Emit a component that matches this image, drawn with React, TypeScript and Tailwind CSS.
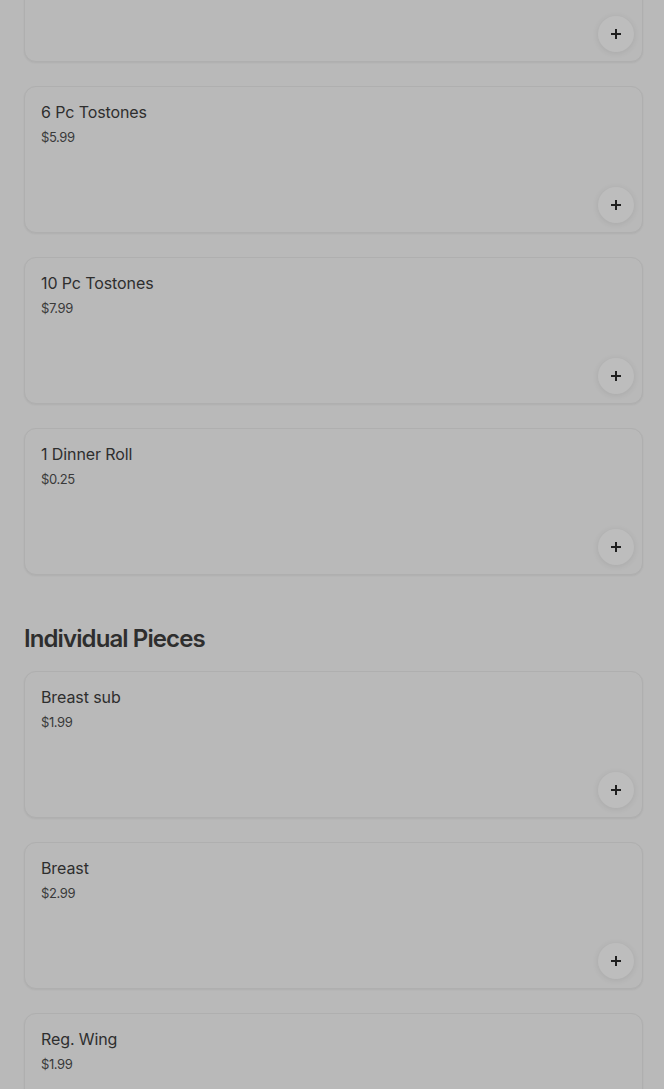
import React from "react";

const items1 = [
  { name: "", price: "" },
  { name: "6 Pc Tostones", price: "$5.99" },
  { name: "10 Pc Tostones", price: "$7.99" },
  { name: "1 Dinner Roll", price: "$0.25" },
];
const items2 = [
  { name: "Breast sub", price: "$1.99" },
  { name: "Breast", price: "$2.99" },
  { name: "Reg. Wing", price: "$1.99" },
];

function Card({ name, price, first }: { name: string; price: string; first?: boolean }) {
  return (
    <div
      className={`relative h-[147px] rounded-[12px] border border-[#afafaf] bg-[#b9b9b9] shadow-[0_1px_2px_rgba(0,0,0,0.06)] px-4 pt-[15px] ${first ? "mt-[-85px]" : ""}`}
    >
      <div className="text-[16px] leading-[20px] tracking-[-0.1px] text-[#2e2e2e]">{name}</div>
      <div className="mt-[5px] text-[13px] leading-[20px] text-[#3a3a3a] tracking-[-0.4px]">{price}</div>
      <div className="absolute right-[8px] bottom-[9px] flex h-[36px] w-[36px] items-center justify-center rounded-full bg-[#bdbdbd] shadow-[0_1px_6px_rgba(0,0,0,0.09)]">
        <svg width="12" height="12" viewBox="0 0 12 12">
          <path d="M6 1v10M1 6h10" stroke="#1f1f1f" strokeWidth="2" />
        </svg>
      </div>
    </div>
  );
}

export default function App() {
  return (
    <div
      className="min-h-[1089px] w-[664px] overflow-hidden bg-[#b9b9b9] pl-6 pr-[21px]"
      style={{ fontFamily: "Inter, 'Noto Sans', sans-serif" }}
    >
      <div className="flex flex-col gap-6">
        {items1.map((it, i) => (
          <Card key={i} name={it.name} price={it.price} first={i === 0} />
        ))}
      </div>
      <h2 className="mt-[48px] mb-[16px] text-[24px] leading-[32px] font-semibold tracking-[-0.9px] text-[#2e2e2e]">
        Individual Pieces
      </h2>
      <div className="flex flex-col gap-6">
        {items2.map((it, i) => (
          <Card key={i} name={it.name} price={it.price} />
        ))}
      </div>
    </div>
  );
}
